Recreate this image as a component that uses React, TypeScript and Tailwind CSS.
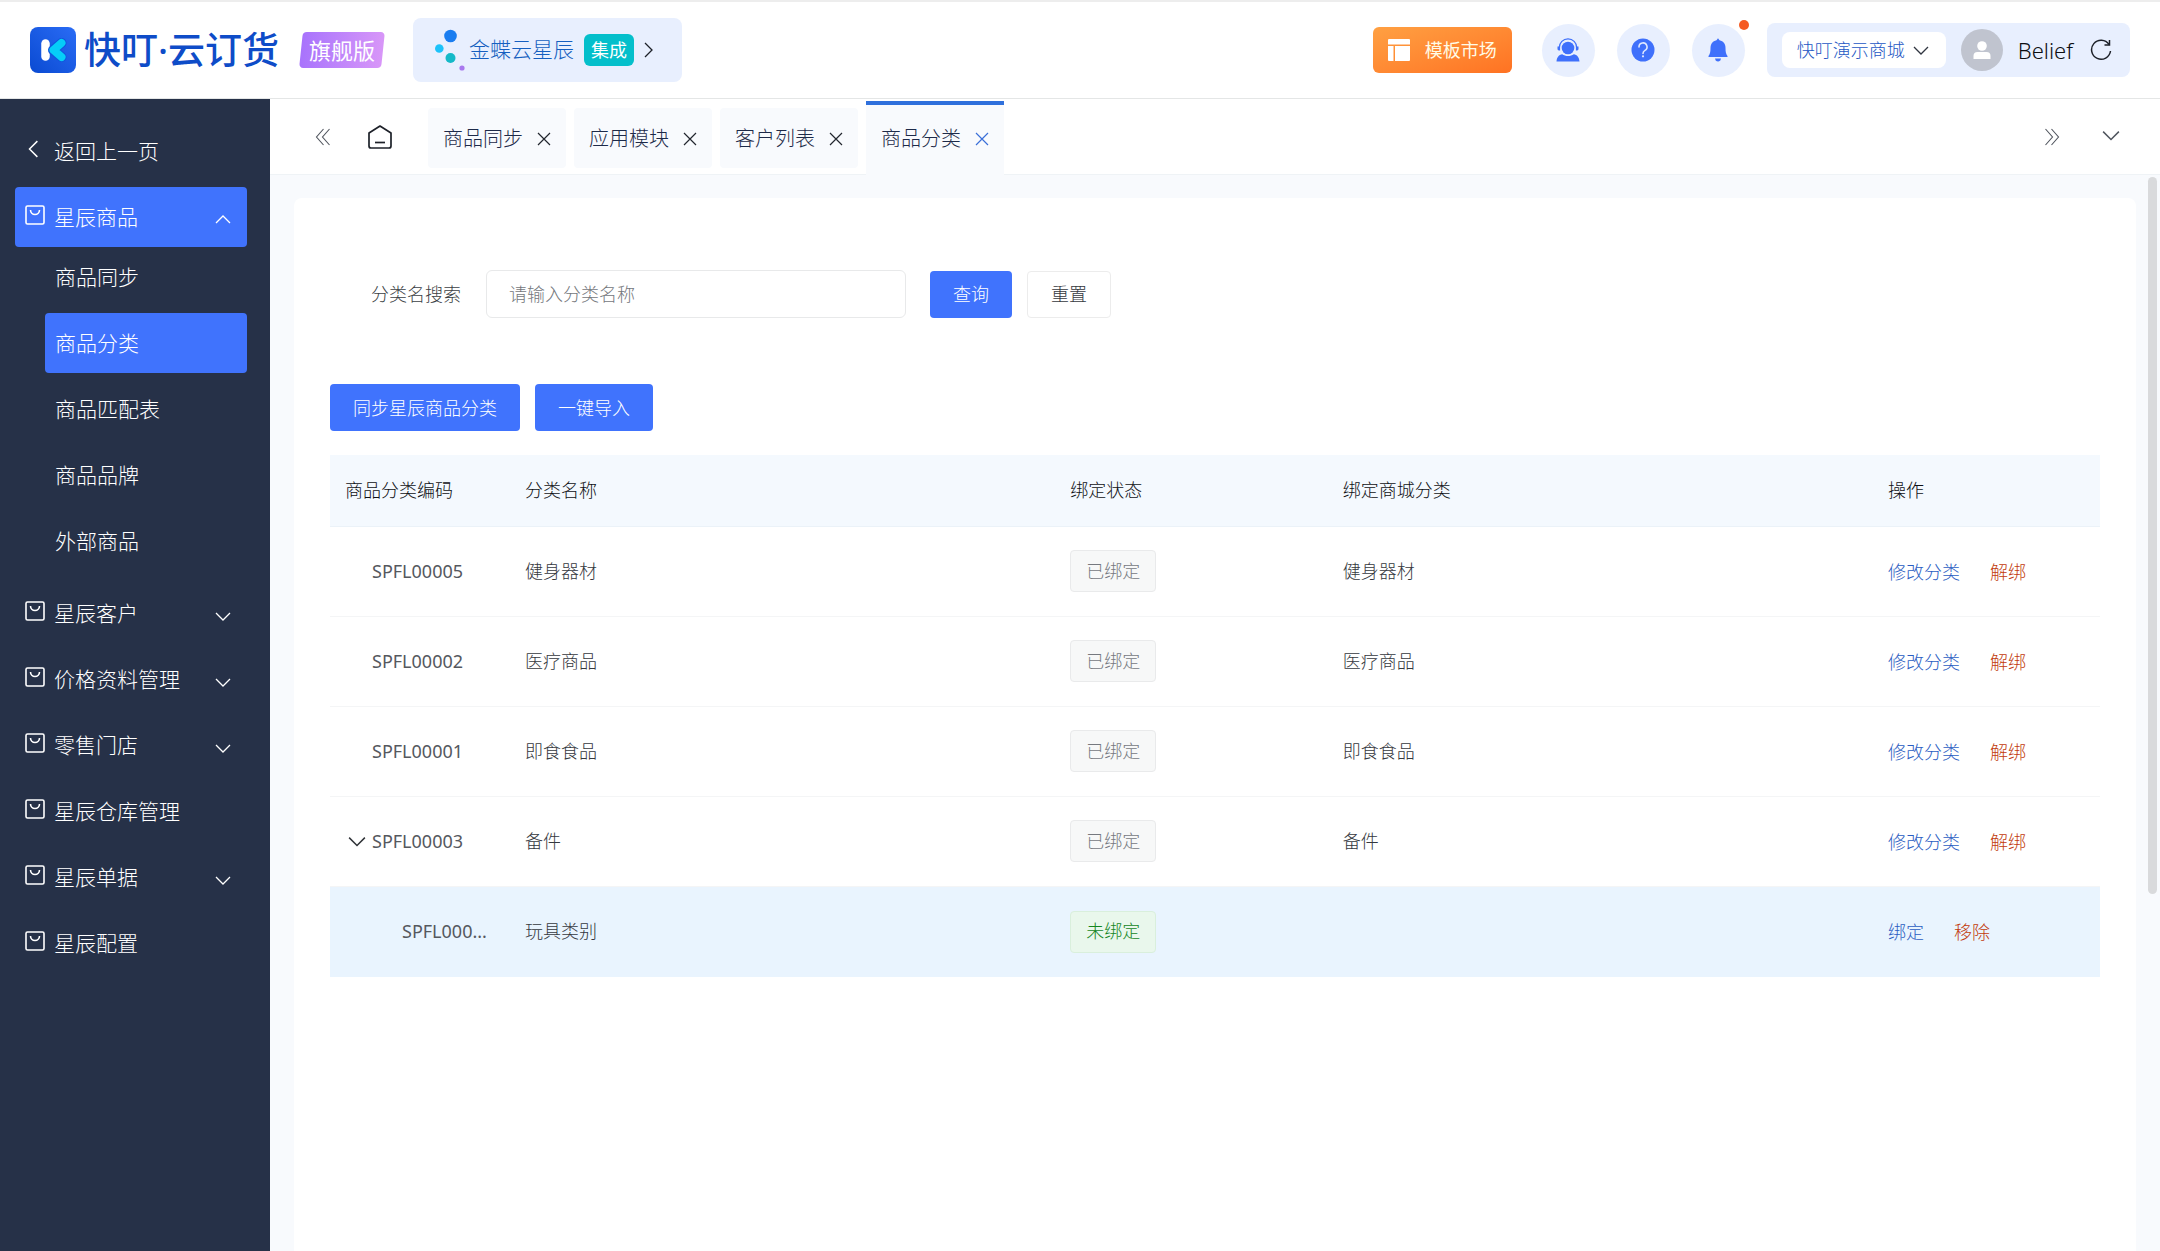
import React from "react";

type IconProps = { className?: string };

const CHEVRONS = {
  down: "M1 5 L8 12 L15 5",
  up: "M1 11 L8 4 L15 11",
  left: "M11 1 L4 8 L11 15",
  right: "M5 1 L12 8 L5 15",
};

function Chevron({ dir, className }: IconProps & { dir: keyof typeof CHEVRONS }) {
  return (
    <svg viewBox="0 0 16 16" className={className} fill="none" stroke="currentColor" aria-hidden="true">
      <path d={CHEVRONS[dir]} strokeWidth="1.3" />
    </svg>
  );
}

function DoubleChevron({ dir }: { dir: "left" | "right" }) {
  return (
    <svg viewBox="0 0 16 18" className="h-[18px] w-4" fill="none" stroke="currentColor" aria-hidden="true">
      <path
        d={dir === "left" ? "M8.5 1 L1.5 9 L8.5 17 M14.5 1 L7.5 9 L14.5 17" : "M1.5 1 L8.5 9 L1.5 17 M7.5 1 L14.5 9 L7.5 17"}
        strokeWidth="1.1"
      />
    </svg>
  );
}

function LogoMark() {
  return (
    <svg viewBox="0 0 46 46" className="size-[46px] shrink-0" aria-hidden="true">
      <defs>
        <linearGradient id="logo-bg" x1="1" y1="0" x2="0" y2="1">
          <stop offset="0" stopColor="#2a6cf5" />
          <stop offset="1" stopColor="#0a4ad2" />
        </linearGradient>
      </defs>
      <rect width="46" height="46" rx="8" fill="url(#logo-bg)" />
      <path d="M15.500 16.500 V29.500" stroke="#fff" strokeWidth="8.500" strokeLinecap="round" />
      <path d="M31.500 16 L23 23 L31.500 30" stroke="#0f55dc" strokeWidth="10" strokeLinecap="round" strokeLinejoin="round" fill="none" />
      <path d="M31.500 16 L23.500 23 L31.500 30" stroke="#06cdf8" strokeWidth="8" strokeLinecap="round" strokeLinejoin="round" fill="none" />
    </svg>
  );
}

function DotsMark() {
  return (
    <svg viewBox="0 0 30 42" className="h-[42px] w-[30px] shrink-0" aria-hidden="true">
      <circle cx="15.500" cy="7" r="6.300" fill="#1a7df0" />
      <circle cx="4.300" cy="19.500" r="4.300" fill="#1cc2fa" />
      <circle cx="15.500" cy="29" r="5" fill="#14b9c8" />
      <circle cx="27" cy="39" r="2.600" fill="#a878ee" />
    </svg>
  );
}

function TemplateIcon() {
  return (
    <svg viewBox="0 0 22 22" className="size-[22px] shrink-0" fill="#fff" aria-hidden="true">
      <path d="M1 0 H21 a1 1 0 0 1 1 1 V5.500 H0 V1 a1 1 0 0 1 1 -1Z" />
      <path d="M0 7 H5.500 V22 H1 a1 1 0 0 1 -1 -1Z" />
      <path d="M7 7 H22 V21 a1 1 0 0 1 -1 1 H7Z" />
    </svg>
  );
}

function SupportIcon() {
  return (
    <svg viewBox="0 0 24 24" className="size-6" aria-hidden="true">
      <circle cx="12" cy="10" r="6.300" fill="#3f70fb" />
      <path d="M3.300 11.500 V9.500 a8.700 8.700 0 0 1 17.400 0 V11.500" fill="none" stroke="#3f70fb" strokeWidth="1.300" />
      <path d="M1.500 8.500 h2.600 v4 h-1.200 a1.400 1.400 0 0 1 -1.400 -1.400Z M22.500 8.500 h-2.600 v4 h1.200 a1.400 1.400 0 0 0 1.400 -1.400Z" fill="#3f70fb" />
      <path d="M0.500 23.500 C0.800 19 3 16.700 6.200 16.200 C9.500 18.600 14.500 18.600 17.800 16.200 C21 16.700 23.200 19 23.500 23.500Z" fill="#3f70fb" />
    </svg>
  );
}

function HelpIcon() {
  return (
    <svg viewBox="0 0 24 24" className="size-6" aria-hidden="true">
      <circle cx="12" cy="12" r="11.500" fill="#3f70fb" />
      <path d="M8 9 a4 4 0 1 1 6 3.400 c-1.300 .8 -2 1.500 -2 3" fill="none" stroke="#dfe8ff" strokeWidth="1.600" strokeLinecap="round" />
      <circle cx="12" cy="18.300" r="1.100" fill="#dfe8ff" />
    </svg>
  );
}

function BellIcon() {
  return (
    <svg viewBox="0 0 24 24" className="size-6" fill="#3f70fb" aria-hidden="true">
      <path d="M12 0.300 L13.500 2.200 C17.500 3 19.500 6 19.500 10 C19.500 14 20 16 21.500 18 V19 H2.500 V18 C4 16 4.500 14 4.500 10 C4.500 6 6.500 3 10.500 2.200Z" />
      <path d="M9 20.500 H15 L14.300 22.500 Q12 24.400 9.700 22.500Z" />
    </svg>
  );
}

function Avatar() {
  return (
    <svg viewBox="0 0 42 42" className="size-[42px] shrink-0" role="img" aria-label="头像">
      <circle cx="21" cy="21" r="21" fill="#c0c4cf" />
      <circle cx="21" cy="17" r="4.800" fill="#fff" />
      <path d="M12.500 30 V27 a4 4 0 0 1 4 -4 H25.500 a4 4 0 0 1 4 4 V30Z" fill="#fff" />
    </svg>
  );
}

function RefreshIcon() {
  return (
    <svg viewBox="0 0 22 22" className="size-[22px]" fill="none" stroke="#1d2129" strokeWidth="1.500" aria-hidden="true">
      <path d="M19 5.500 A9.500 9.500 0 1 0 20.500 12" />
      <path d="M19.500 1 V6 H14.500" />
    </svg>
  );
}

function HomeIcon() {
  return (
    <svg viewBox="0 0 24 24" className="size-6" fill="none" stroke="#1d2129" strokeWidth="1.700" strokeLinejoin="round" aria-hidden="true">
      <path d="M1 8 L12 1 L23 8 V21 a2 2 0 0 1 -2 2 H3 a2 2 0 0 1 -2 -2Z" />
      <path d="M7 17.500 H17" />
    </svg>
  );
}

function BagIcon() {
  return (
    <svg viewBox="0 0 20 20" className="size-5 shrink-0" fill="none" stroke="#fff" strokeWidth="1.600" aria-hidden="true">
      <rect x="1" y="1" width="18" height="18" rx="1.500" />
      <path d="M5.500 5 a4.500 4.500 0 0 0 9 0" />
    </svg>
  );
}

function CloseIcon() {
  return (
    <svg viewBox="0 0 14 14" className="size-3.5" stroke="currentColor" strokeWidth="1.200" aria-hidden="true">
      <path d="M1 1 L13 13 M13 1 L1 13" />
    </svg>
  );
}

function Header() {
  return (
    <header className="flex h-[99px] shrink-0 items-center border-t-2 border-b border-t-[#ededed] border-b-[#e4e6e6] bg-white px-[30px]">
      <a href="#home" className="flex items-center gap-2">
        <LogoMark />
        <span className="text-[37px] leading-[48px] font-medium text-[#0e4cc8]">快叮·云订货</span>
      </a>
      <span className="relative ml-[22px] flex h-9 items-center px-2">
        <span className="absolute inset-0 -skew-x-6 rounded-sm bg-linear-to-r from-[#a873fc] to-[#d896f8]" />
        <span className="relative text-[22px] leading-none font-normal text-white">旗舰版</span>
      </span>
      <button type="button" className="ml-[30px] flex h-16 items-center rounded-lg bg-[#e8effe] pr-[26px] pl-[22px]">
        <DotsMark />
        <span className="ml-1 text-[21px] text-[#155fc0]">金蝶云星辰</span>
        <span className="ml-2.5 flex h-8 items-center rounded-md bg-[#04bfcb] px-[7px] text-[18px] font-normal text-white">集成</span>
        <Chevron dir="right" className="ml-1.5 size-4 text-[#1d2129]" />
      </button>

      <div className="ml-auto flex items-center">
        <button type="button" className="flex h-[46px] items-center gap-[15px] rounded-md bg-linear-to-br from-[#ffa042] to-[#ff7222] px-[15px] text-[18px] font-normal text-[#fffbe6]">
          <TemplateIcon />
          模板市场
        </button>
        <div className="ml-[30px] flex gap-[22px]">
          <button type="button" aria-label="客服" className="flex size-[53px] items-center justify-center rounded-full bg-[#e8effe]">
            <SupportIcon />
          </button>
          <button type="button" aria-label="帮助" className="flex size-[53px] items-center justify-center rounded-full bg-[#e8effe]">
            <HelpIcon />
          </button>
          <button type="button" aria-label="通知" className="relative flex size-[53px] items-center justify-center rounded-full bg-[#e8effe]">
            <BellIcon />
            <span className="absolute -top-1 -right-1 size-2.5 rounded-full bg-[#f55a22]" />
          </button>
        </div>
        <div className="ml-[22px] flex h-[54px] items-center rounded-lg bg-[#e8effe] pr-[18px] pl-[15px]">
          <button type="button" className="flex h-9 items-center gap-2 rounded-lg bg-white pr-[17px] pl-[15px] text-[18px] text-[#2457c4]">
            快叮演示商城
            <Chevron dir="down" className="size-4 text-[#303540]" />
          </button>
          <span className="ml-[15px]">
            <Avatar />
          </span>
          <span className="ml-[15px] text-[22px] text-[#0c0e12]">Belief</span>
          <button type="button" aria-label="刷新" className="ml-[17px]">
            <RefreshIcon />
          </button>
        </div>
      </div>
    </header>
  );
}

type MenuItem = { label: string; expandable?: boolean; open?: boolean };

const SUB_ITEMS = ["商品同步", "商品分类", "商品匹配表", "商品品牌", "外部商品"];

const MENU: MenuItem[] = [
  { label: "星辰客户", expandable: true },
  { label: "价格资料管理", expandable: true },
  { label: "零售门店", expandable: true },
  { label: "星辰仓库管理" },
  { label: "星辰单据", expandable: true },
  { label: "星辰配置" },
];

function MenuButton({ item }: { item: MenuItem }) {
  return (
    <button
      type="button"
      aria-expanded={item.expandable ? Boolean(item.open) : undefined}
      className={
        item.open
          ? "flex h-[60px] w-full items-center gap-[9px] rounded-sm bg-[#4073fd] pt-0.5 pr-4 pl-2.5"
          : "flex h-[60px] w-full items-center gap-[9px] pt-0.5 pr-4 pl-2.5"
      }
    >
      <span className="pb-1.5">
        <BagIcon />
      </span>
      {item.label}
      {item.expandable && <Chevron dir={item.open ? "up" : "down"} className="mt-1 ml-auto size-4" />}
    </button>
  );
}

function Sidebar() {
  return (
    <nav className="w-[270px] shrink-0 bg-[#263148] pt-[22px] pr-[23px] pl-[15px] text-[21px] text-white">
      <a href="#back" className="flex h-[60px] items-center gap-[11px] pt-0.5 pl-2.5">
        <Chevron dir="left" className="mb-1.5 size-[18px]" />
        返回上一页
      </a>
      <div className="mt-1.5">
        <MenuButton item={{ label: "星辰商品", expandable: true, open: true }} />
        <ul className="mb-3 flex flex-col gap-1.5 pl-[30px]">
          {SUB_ITEMS.map((label) => (
            <li key={label}>
              <a
                href={"#" + label}
                className={
                  label === "商品分类"
                    ? "flex h-[60px] items-center rounded-sm bg-[#4073fd] pt-0.5 pl-2.5"
                    : "flex h-[60px] items-center pt-0.5 pl-2.5"
                }
              >
                {label}
              </a>
            </li>
          ))}
        </ul>
      </div>
      <ul className="flex flex-col gap-1.5">
        {MENU.map((item) => (
          <li key={item.label}>
            <MenuButton item={item} />
          </li>
        ))}
      </ul>
    </nav>
  );
}

const TABS = ["商品同步", "应用模块", "客户列表", "商品分类"];

function TabBar() {
  return (
    <div className="flex h-[76px] shrink-0 items-center border-b border-[#eff3f6] bg-white pr-10 pl-[45px] text-[#50555e]">
      <button type="button" aria-label="向左滚动">
        <DoubleChevron dir="left" />
      </button>
      <button type="button" aria-label="首页" className="ml-[37px]">
        <HomeIcon />
      </button>
      <div className="ml-9 flex items-center gap-2 self-stretch text-[20px] text-[#1d2a49]">
        {TABS.map((label) => {
          const active = label === "商品分类";
          return (
            <div
              key={label}
              className={
                active
                  ? "mt-0.5 -mb-px flex items-center gap-3.5 self-stretch border-t-4 border-[#2f70dc] bg-[#f8fafd] px-[15px] pb-0.5"
                  : "mt-0.5 flex h-[60px] items-center gap-3.5 rounded-sm bg-[#f8fafd] px-[15px] pt-0.5"
              }
            >
              <button type="button">{label}</button>
              <button type="button" aria-label={"关闭" + label} className={active ? "text-[#3a6fd8]" : "text-[#22262e]"}>
                <CloseIcon />
              </button>
            </div>
          );
        })}
      </div>
      <button type="button" aria-label="向右滚动" className="ml-auto">
        <DoubleChevron dir="right" />
      </button>
      <button type="button" aria-label="更多标签" className="mb-1 ml-[42px]">
        <Chevron dir="down" className="size-[18px]" />
      </button>
    </div>
  );
}

type Row = {
  code: string;
  name: string;
  bound: boolean;
  mall: string;
  expandable?: boolean;
  child?: boolean;
};

const ROWS: Row[] = [
  { code: "SPFL00005", name: "健身器材", bound: true, mall: "健身器材" },
  { code: "SPFL00002", name: "医疗商品", bound: true, mall: "医疗商品" },
  { code: "SPFL00001", name: "即食食品", bound: true, mall: "即食食品" },
  { code: "SPFL00003", name: "备件", bound: true, mall: "备件", expandable: true },
  { code: "SPFL000...", name: "玩具类别", bound: false, mall: "", child: true },
];

function CategoryTable() {
  return (
    <table className="mt-6 w-full table-fixed text-left text-[18px] text-[#35383e]">
      <colgroup>
        <col className="w-[180px]" />
        <col className="w-[30.8%]" />
        <col className="w-[15.4%]" />
        <col className="w-[30.8%]" />
        <col />
      </colgroup>
      <thead>
        <tr className="h-[71px] border-b border-[#ebf2f8] bg-[#f4f9fe] text-[#0f1115]">
          {["商品分类编码", "分类名称", "绑定状态", "绑定商城分类", "操作"].map((h) => (
            <th key={h} scope="col" className="px-[15px] font-light">
              {h}
            </th>
          ))}
        </tr>
      </thead>
      <tbody>
        {ROWS.map((r) => (
          <tr key={r.name} className={r.child ? "h-[91px] bg-[#e9f4fe]" : "h-[90px] border-b border-[#f4f5f6]"}>
            <td className="px-[15px] font-normal whitespace-nowrap text-[#55585e]">
              <div className={r.child ? "flex items-center pl-[57px]" : r.expandable ? "flex items-center gap-1.5 pl-[3px]" : "flex items-center pl-[27px]"}>
                {r.expandable && (
                  <button type="button" aria-label="收起">
                    <Chevron dir="down" className="size-[18px] text-[#303338]" />
                  </button>
                )}
                {r.code}
              </div>
            </td>
            <td className="px-[15px]">{r.name}</td>
            <td className="px-[15px]">
              <span
                className={
                  r.bound
                    ? "inline-flex h-[42px] items-center rounded-sm border border-[#e9eaeb] bg-[#f7f8f8] px-[15px] text-[#76797f]"
                    : "inline-flex h-[42px] items-center rounded-sm border border-[#d9efdc] bg-[#e9f7ec] px-[15px] text-[#15861f]"
                }
              >
                {r.bound ? "已绑定" : "未绑定"}
              </span>
            </td>
            <td className="px-[15px]">{r.mall}</td>
            <td className="px-[15px]">
              <div className="flex gap-[30px] pt-0.5">
                <button type="button" className="text-[#2b5dc2]">
                  {r.bound ? "修改分类" : "绑定"}
                </button>
                <button type="button" className="text-[#c23a0c]">
                  {r.bound ? "解绑" : "移除"}
                </button>
              </div>
            </td>
          </tr>
        ))}
      </tbody>
    </table>
  );
}

function Content() {
  return (
    <main className="relative flex grow bg-[#f8fafd] pt-[23px] pr-6 pl-6">
      <section className="grow rounded-t-lg bg-white px-9 pt-[72px]">
        <form className="flex items-center pl-[41px] text-[18px]" onSubmit={(e) => e.preventDefault()}>
          <label htmlFor="category-name" className="text-[#3c3f45]">
            分类名搜索
          </label>
          <input
            id="category-name"
            type="text"
            placeholder="请输入分类名称"
            className="ml-[25px] h-12 w-[420px] rounded-md border border-[#e8e9ea] px-[22px] placeholder:text-[#74777c]"
          />
          <button type="submit" className="ml-6 h-[47px] rounded-sm bg-[#4073fd] px-[23px] text-white">
            查询
          </button>
          <button type="reset" className="ml-[15px] h-[47px] rounded-sm border border-[#ececec] bg-white px-[23px] text-[#35383e]">
            重置
          </button>
        </form>
        <div className="mt-[66px] flex gap-[15px] text-[18px] text-white">
          <button type="button" className="h-[47px] rounded-sm bg-[#4073fd] px-[23px] pt-0.5">
            同步星辰商品分类
          </button>
          <button type="button" className="h-[47px] rounded-sm bg-[#4073fd] px-[23px] pt-0.5">
            一键导入
          </button>
        </div>
        <CategoryTable />
      </section>
      <div className="absolute top-0.5 right-[3px] h-2/3 w-[9px] rounded-full bg-[#d9dadc]" />
    </main>
  );
}

export default function App() {
  return (
    <div className="flex min-h-screen flex-col bg-white font-['Noto_Sans','Noto_Sans_CJK_SC',sans-serif] font-light">
      <Header />
      <div className="flex grow">
        <Sidebar />
        <div className="flex min-w-0 grow flex-col">
          <TabBar />
          <Content />
        </div>
      </div>
    </div>
  );
}
